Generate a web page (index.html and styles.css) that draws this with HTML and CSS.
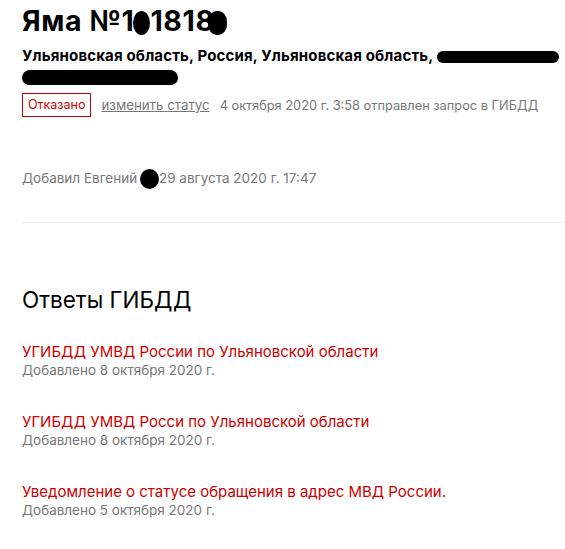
FILE: index.html
```html
<!DOCTYPE html>
<html lang="ru">
<head>
<meta charset="utf-8">
<link rel="stylesheet" href="styles.css">
</head>
<body>
<main class="page">
  <h1 class="title">Яма №1<span class="blot blot-digit"></span>1818<span class="blot blot-digit2"></span></h1>
  <div class="address">Ульяновская область, Россия, Ульяновская область, <span class="blot blot-addr1"></span><br><span class="blot blot-addr2"></span></div>
  <div class="status-row">
    <span class="badge">Отказано</span>
    <a class="change" href="#">изменить статус</a>
    <span class="meta">4 октября 2020 г. 3:58 отправлен запрос в ГИБДД</span>
  </div>
  <div class="added">Добавил Евгений <span class="blot blot-name"></span>29 августа 2020 г. 17:47</div>
  <hr class="divider">
  <h2 class="section">Ответы ГИБДД</h2>
  <ul class="answers">
    <li class="answer">
      <a class="answer-title" href="#">УГИБДД УМВД России по Ульяновской области</a>
      <div class="answer-date">Добавлено 8 октября 2020 г.</div>
    </li>
    <li class="answer">
      <a class="answer-title" href="#">УГИБДД УМВД Росси по Ульяновской области</a>
      <div class="answer-date">Добавлено 8 октября 2020 г.</div>
    </li>
    <li class="answer">
      <a class="answer-title" href="#">Уведомление о статусе обращения в адрес МВД России.</a>
      <div class="answer-date">Добавлено 5 октября 2020 г.</div>
    </li>
  </ul>
</main>
</body>
</html>
```

FILE: styles.css
```css
html, body {
  margin: 0;
  padding: 0;
  background: #fff;
}
body {
  font-family: Inter, Roboto, "Liberation Sans", sans-serif;
  color: #000;
}
.page {
  padding: 0 0 0 22px;
}
.title {
  margin: 0;
  padding-top: 4px;
  font-size: 28.5px;
  font-weight: 700;
  line-height: 34px;
  letter-spacing: 0.6px;
}
.blot {
  display: inline-block;
  background: #000;
  vertical-align: middle;
}
.blot-digit {
  width: 17px;
  height: 24px;
  border-radius: 50%;
  margin: 0 0 0 -1px;
}
.blot-digit2 {
  width: 19px;
  height: 24px;
  border-radius: 45%;
  margin-left: -7px;
}
.address {
  margin-top: 8px;
  font-size: 15px;
  font-weight: 700;
  line-height: 20px;
  letter-spacing: 0.15px;
}
.blot-addr1 {
  width: 122px;
  height: 12px;
  border-radius: 6px;
  vertical-align: -2px;
}
.blot-addr2 {
  width: 156px;
  height: 15px;
  border-radius: 8px 8px 7px 7px;
  vertical-align: -4px;
}
.status-row {
  display: flex;
  align-items: center;
  margin-top: 7px;
  font-size: 13px;
}
.badge {
  border: 1px solid #c00;
  color: #c00;
  font-size: 12.5px;
  padding: 3px 5px 4px;
  margin-right: 10px;
}
.change {
  color: #777;
  text-decoration: underline;
  font-size: 13.3px;
  margin-right: 10px;
}
.meta {
  color: #777;
  font-size: 12.8px;
}
.added {
  margin-top: 52px;
  font-size: 13.5px;
  color: #777;
}
.blot-name {
  width: 19px;
  height: 20px;
  border-radius: 50%;
  vertical-align: -6px;
  margin-left: -1px;
}
.divider {
  border: 0;
  border-top: 1px solid #eee;
  margin: 33px 0 0;
}
.section {
  margin: 63px 0 0;
  font-size: 22.5px;
  font-weight: 400;
  line-height: 28px;
}
.answers {
  list-style: none;
  margin: 28px 0 0;
  padding: 0;
}
.answer {
  margin-bottom: 33px;
}
.answer-title {
  display: block;
  color: #c00;
  text-decoration: none;
  font-size: 15px;
  line-height: 19px;
}
.answer-date {
  color: #777;
  font-size: 13.5px;
  line-height: 18px;
}
```
